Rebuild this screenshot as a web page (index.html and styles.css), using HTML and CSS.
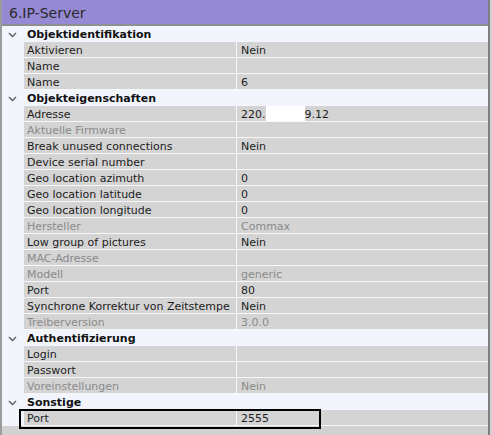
FILE: index.html
```html
<!DOCTYPE html>
<html lang="de">
<head>
    <meta charset="UTF-8">
    <title>6.IP-Server</title>
    <link rel="stylesheet" href="styles.css">
</head>
<body>
    <div class="panel">
        <div class="title">6.IP-Server</div>

        <div class="section"><span class="chev"><svg width="9" height="6" viewBox="0 0 9 6"><polyline points="1,1 4.5,4.5 8,1" fill="none" stroke="#606060" stroke-width="1.4"/></svg></span>Objektidentifikation</div>
        <div class="row"><div class="label">Aktivieren</div><div class="value">Nein</div></div>
        <div class="row"><div class="label">Name</div><div class="value"></div></div>
        <div class="row"><div class="label">Name</div><div class="value">6</div></div>

        <div class="section"><span class="chev"><svg width="9" height="6" viewBox="0 0 9 6"><polyline points="1,1 4.5,4.5 8,1" fill="none" stroke="#606060" stroke-width="1.4"/></svg></span>Objekteigenschaften</div>
        <div class="row"><div class="label">Adresse</div><div class="value">220.<span class="mask"></span>9.12</div></div>
        <div class="row off"><div class="label">Aktuelle Firmware</div><div class="value"></div></div>
        <div class="row"><div class="label">Break unused connections</div><div class="value">Nein</div></div>
        <div class="row"><div class="label">Device serial number</div><div class="value"></div></div>
        <div class="row"><div class="label">Geo location azimuth</div><div class="value">0</div></div>
        <div class="row"><div class="label">Geo location latitude</div><div class="value">0</div></div>
        <div class="row"><div class="label">Geo location longitude</div><div class="value">0</div></div>
        <div class="row off"><div class="label">Hersteller</div><div class="value">Commax</div></div>
        <div class="row"><div class="label">Low group of pictures</div><div class="value">Nein</div></div>
        <div class="row off"><div class="label">MAC-Adresse</div><div class="value"></div></div>
        <div class="row off"><div class="label">Modell</div><div class="value">generic</div></div>
        <div class="row"><div class="label">Port</div><div class="value">80</div></div>
        <div class="row"><div class="label">Synchrone Korrektur von Zeitstempe</div><div class="value">Nein</div></div>
        <div class="row off"><div class="label">Treiberversion</div><div class="value">3.0.0</div></div>

        <div class="section"><span class="chev"><svg width="9" height="6" viewBox="0 0 9 6"><polyline points="1,1 4.5,4.5 8,1" fill="none" stroke="#606060" stroke-width="1.4"/></svg></span>Authentifizierung</div>
        <div class="row"><div class="label">Login</div><div class="value"></div></div>
        <div class="row"><div class="label">Passwort</div><div class="value"></div></div>
        <div class="row off"><div class="label">Voreinstellungen</div><div class="value">Nein</div></div>

        <div class="section"><span class="chev"><svg width="9" height="6" viewBox="0 0 9 6"><polyline points="1,1 4.5,4.5 8,1" fill="none" stroke="#606060" stroke-width="1.4"/></svg></span>Sonstige</div>
        <div class="row selected"><div class="label">Port</div><div class="value">2555</div></div>
    </div>
</body>
</html>
```

FILE: styles.css
```css
body {
    margin: 0;
    background-color: #d2d2d2;
    font-family: "DejaVu Sans", Verdana, sans-serif;
    font-size: 11px;
    color: #1c1c1c;
}
.panel {
    width: 486px;
    height: 435px;
    border-left: 2px solid #9c9c9c;
    border-right: 2px solid #7e7e80;
    background-color: #d2d2d2;
}
.title {
    height: 24px;
    line-height: 26px;
    padding-left: 7px;
    background-color: #9689d4;
    border-bottom: 2px solid #8f8f8f;
    font-size: 14px;
    color: #2a2a2a;
}
.section {
    display: flex;
    align-items: center;
    height: 16px;
    padding-top: 1px;
    box-sizing: border-box;
    background-color: #f2f5fc;
    font-weight: bold;
    color: #111;
}
.chev {
    width: 25px;
    padding-left: 6px;
    box-sizing: border-box;
    display: flex;
    align-items: center;
}
.row {
    position: relative;
    display: flex;
    height: 16px;
    padding-left: 22px;
    background-color: #f2f5fc;
}
.label, .value {
    height: 15px;
    line-height: 17px;
    border-bottom: 1px solid #f7f7f7;
    background-color: #d4d4d4;
    white-space: nowrap;
    overflow: hidden;
}
.label {
    width: 209px;
    padding-left: 3px;
    border-right: 1px solid #f7f7f7;
}
.value {
    flex: 1;
    padding-left: 4px;
}
.off .label, .off .value {
    color: #8a8a8a;
}
.mask {
    display: inline-block;
    width: 39px;
    height: 15px;
    vertical-align: top;
    background-color: #fff;
}
.selected::after {
    content: "";
    position: absolute;
    left: 17px;
    top: -1px;
    width: 298px;
    height: 16px;
    border: 2px solid #000;
}
```
